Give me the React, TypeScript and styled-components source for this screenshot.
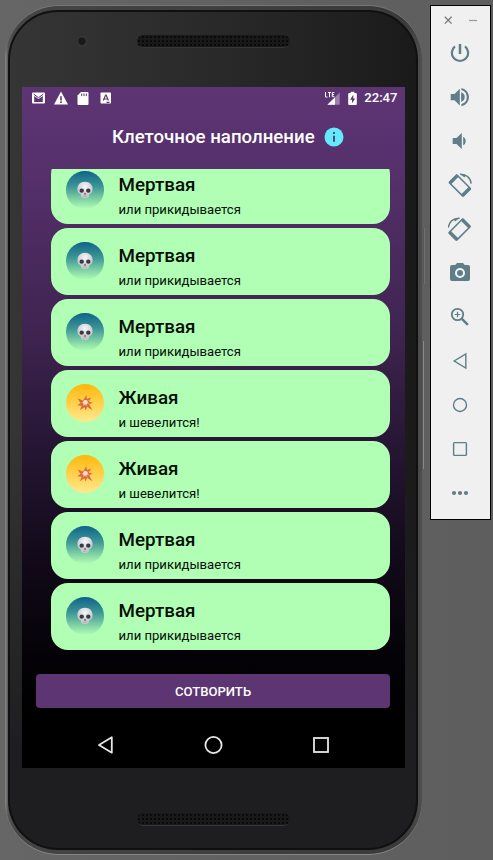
import React from "react";
import styled, { createGlobalStyle } from "styled-components";

const GlobalStyle = createGlobalStyle`
  * { box-sizing: border-box; }
  body { margin: 0; overflow: hidden; background: #626262; }
  svg { display: block; flex: none; }
`;

const Desktop = styled.main`
  display: flex;
  align-items: flex-start;
  width: 493px;
  height: 860px;
  padding: 5px 2px 5px 5px;
  background: linear-gradient(90deg, #666 0%, #626162 50%, #5e5e5e 100%);
  font-family: Roboto, "Noto Sans", sans-serif;
`;

const PhoneShell = styled.section`
  position: relative;
  width: 417px;
  height: 850px;
  padding: 4px 4px 4px 3px;
  border-radius: 54px;
  background: linear-gradient(90deg, #8a8a8a 0, #555 3px, #444 12px, #3a3a3a 400px, #4e4e4e 100%);
  border-top: 1px solid #777;
  border-bottom: 1px solid #858585;
`;

const PhoneFace = styled.div`
  display: flex;
  flex-direction: column;
  align-items: center;
  height: 100%;
  border: 2px solid #101010;
  border-radius: 50px;
  background:
    linear-gradient(180deg, transparent 0%, transparent 50%, #1e1e20 88%),
    linear-gradient(90deg, #353535 0%, #2c2c2c 40%, #212121 80%, #1a1a1a 100%);
`;

const SideButton = styled.div<{ $top: number; $height: number; $right: number; $tone: string }>`
  position: absolute;
  right: ${(p) => p.$right}px;
  top: ${(p) => p.$top}px;
  width: 2px;
  height: ${(p) => p.$height}px;
  border-right: 1px solid ${(p) => p.$tone};
  background: #555;
`;

const TopBezel = styled.div`
  display: flex;
  align-items: center;
  width: 100%;
  height: 75px;
  padding: 0 0 17px 67px;
`;

const Lens = styled.div`
  width: 11px;
  height: 11px;
  margin-right: 49px;
  border-radius: 50%;
  background: radial-gradient(circle at 45% 48%, #191919 0 3px, #3c3c3c 5px, #303030 6px);
`;

const Grille = styled.div`
  width: 153px;
  height: 13px;
  border-radius: 7px;
  border-bottom: 1px solid #363636;
  background: radial-gradient(circle, #0a0a0a 0.7px, transparent 1.3px) 0 0 / 4px 4px, #191919;
`;

const BottomBezel = styled.div`
  display: flex;
  width: 100%;
  padding: 45px 0 0 127px;
`;

const Screen = styled.div`
  display: flex;
  flex-direction: column;
  width: 383px;
  height: 681px;
  margin-left: 1px;
  flex: none;
  background: linear-gradient(180deg, #5d3573 0%, #55306b 13%, #3f2450 36%, #241532 54%, #110918 70%, #040206 84%, #000 92%);
  color: #fff;
`;

const StatusBar = styled.div`
  display: flex;
  align-items: center;
  justify-content: space-between;
  height: 22px;
  padding: 0 7.5px 0 9px;
`;

const StatusIcons = styled.div`
  display: flex;
  align-items: center;
  gap: 7px;
`;

const Clock = styled.span`
  font-size: 13.1px;
  line-height: 22px;
  font-weight: 500;
`;

const Header = styled.header`
  display: flex;
  align-items: center;
  gap: 9px;
  height: 60px;
  padding: 0 0 5px 90px;
`;

const Heading = styled.h1`
  margin: 0;
  font-size: 18.67px;
  line-height: 24px;
  font-weight: 500;
  white-space: nowrap;
`;

const CellList = styled.div`
  display: flex;
  flex-direction: column;
  justify-content: flex-end;
  gap: 4px;
  height: 481px;
  margin: 0 15px 0 29px;
  overflow: hidden;
`;

const CellCard = styled.article`
  display: flex;
  flex: none;
  height: 67px;
  padding: 14px 15px 0;
  gap: 15px;
  border-radius: 17px;
  background: #b0ffb4;
  color: #060e06;
`;

const Avatar = styled.div<{ $alive: boolean }>`
  display: flex;
  align-items: center;
  justify-content: center;
  width: 37.5px;
  height: 37.5px;
  border-radius: 50%;
  background: ${(p) =>
    p.$alive
      ? "linear-gradient(180deg, #ffb80a, #ffe98f)"
      : "linear-gradient(180deg, #0e638a 0%, #3f9795 42%, #8bdca8 80%, #b0ffb4 100%)"};
`;

const CellText = styled.div`
  display: flex;
  flex-direction: column;
  padding-top: 2px;
`;

const CellTitle = styled.span`
  font-size: 18.8px;
  line-height: 24px;
  font-weight: 500;
`;

const CellNote = styled.span`
  padding-top: 4px;
  font-size: 13.1px;
  line-height: 18px;
  white-space: nowrap;
`;

const CreateButton = styled.button`
  height: 34px;
  margin: 24px 15px 0 14px;
  padding: 0;
  border: 0;
  border-radius: 4px;
  background: #5d3573;
  color: #fff;
  font: 500 13.1px/35px Roboto, sans-serif;
`;

const NavBar = styled.nav`
  display: flex;
  justify-content: space-between;
  align-items: center;
  height: 46px;
  margin-top: 14px;
  padding: 0 74px;
`;

const Toolbar = styled.aside`
  display: flex;
  flex-direction: column;
  align-items: center;
  width: 61px;
  height: 515px;
  margin-left: 8px;
  padding-right: 1px;
  border: 1px solid #000;
  background: #f0f0f1;
  color: #5f7e88;
`;

const WindowControls = styled.div`
  display: flex;
  gap: 14px;
  padding: 8px 0 0 2px;
  height: 25px;
  color: #777;
`;

const ToolButton = styled.div`
  display: flex;
  align-items: center;
  height: 44px;
`;

const Skull = () => (
  <svg width="18" height="20" viewBox="0 0 18 20">
    <defs>
      <radialGradient id="bone" cx="50%" cy="30%">
        <stop offset="0" stopColor="#f8f6f8" />
        <stop offset="1" stopColor="#c9ccd2" />
      </radialGradient>
    </defs>
    <path d="M9 1.800c4.800 0 7.600 3.200 7.600 7.200 0 2.200-.8 4-2.400 4.800-1 .4-1 1-1.200 1.900-.2 1.500-1.600 2.200-4 2.200s-3.800-.7-4-2.200c-.2-.9-.2-1.500-1.200-1.900C2.200 13 1.400 11.200 1.400 9c0-4 2.800-7.200 7.600-7.200z" fill="url(#bone)" />
    <ellipse cx="5.700" cy="10.700" rx="2.200" ry="2.100" fill="#3d3942" />
    <ellipse cx="12.300" cy="10.700" rx="2.200" ry="2.100" fill="#3d3942" />
    <path d="M9 12.600l1.100 1.900H7.900z" fill="#5a3b40" />
    <path d="M6.800 16.100h4.400M8 15.500v1.600M10 15.500v1.600" stroke="#b3a9ab" strokeWidth=".6" />
  </svg>
);

const Burst = () => (
  <svg width="19" height="19" viewBox="0 0 19 19">
    <path d="M9.500 5.400L11.200 2l.7 4 4.200-1.600-2.300 4 3.900 1.300-3.600 1.600 3.300 5.900-5.300-3.400-1.400 3.800-1.300-3.400-4.500 3 1.800-4.500-4.600-.5 3.500-2.300-3.200-4.700 5.200 2.200z" fill="#d8683e" />
    <path d="M9.900 6.400l1.500 1.500 2.600-.8-1.300 2 1.900 1.600-2.600.4.500 2.300-2.300-1.400-2.200 1.300.4-2.500-2.400-.9 2.400-1.100z" fill="#f4a078" />
    <circle cx="10.300" cy="9.300" r="2.200" fill="#ffe5c4" />
  </svg>
);

const StatusBarView = () => (
  <StatusBar>
    <StatusIcons>
      <svg width="15" height="14" viewBox="0 0 15 14">
        <rect x="1" y="1.500" width="13" height="11" rx="1" fill="#fff" />
        <path d="M3.200 11V5l4.300 3.100L11.800 5v6z" fill="#5d3573" />
        <path d="M2.700 3.200l4.800 3.500 4.800-3.500" fill="none" stroke="#5d3573" strokeWidth="1" />
      </svg>
      <svg width="16" height="14" viewBox="0 0 16 14">
        <path d="M8 .4l7 13H1z" fill="#fff" />
        <path d="M8 5.200v4.200M8 10.300v1.700" stroke="#5d3573" strokeWidth="1.600" />
      </svg>
      <svg width="14" height="15" viewBox="0 0 14 15">
        <path d="M5 1h6.500a1 1 0 011 1v11a1 1 0 01-1 1h-9a1 1 0 01-1-1V4.600z" fill="#fff" />
        <path d="M5.700 2.500v2.600M8 2.500v2.600M10.300 2.500v2.600" stroke="#5d3573" strokeWidth="1" />
      </svg>
      <svg width="17" height="14" viewBox="0 0 17 14">
        <rect x="3.500" y="1.500" width="10.500" height="11" rx=".8" fill="#fff" />
        <path d="M6.300 9.600L8.600 4h.5l2.300 5.600M7 8h3.700M9.500 11.300h3" fill="none" stroke="#5d3573" strokeWidth="1.200" />
      </svg>
    </StatusIcons>
    <StatusIcons>
      <svg width="17" height="15" viewBox="0 0 17 15">
        <path d="M15.700 1.500V13.800H3.400z" fill="#fff" opacity=".38" />
        <path d="M11 6.200v7.600H3.400z" fill="#fff" />
        <path d="M1.500 1v5h2M4 1.500h3M5.500 1.500V6.200M10.300 1.500H8.300v4.200h2M8.300 3.600h1.800" fill="none" stroke="#fff" strokeWidth="1" />
      </svg>
      <svg width="9" height="15" viewBox="0 0 9 15">
        <path d="M2.700.8h3.600v1.300h1.500a1 1 0 011 1v10a1 1 0 01-1 1H1.200a1 1 0 01-1-1v-10a1 1 0 011-1h1.500z" fill="#fff" />
        <path d="M5.300 3.800L2 8.700h2v3.500l3.200-4.800H5.300z" fill="#5d3573" />
      </svg>
      <Clock>22:47</Clock>
    </StatusIcons>
  </StatusBar>
);

const RotateGlyph = ({ mirrored = false }: { mirrored?: boolean }) => (
  <svg width="24" height="24" viewBox="0 0 24 24">
    <g transform={mirrored ? "translate(23.500 0) scale(-1 1)" : undefined} fill="none" stroke="currentColor">
      <g transform="rotate(45 11.900 12.600)">
        <rect x="2.100" y="7.200" width="19.600" height="10.800" rx="1" strokeWidth="1.600" />
        <path d="M3.200 7v11.200M20.600 7v11.200" strokeWidth="3.200" />
      </g>
      <path d="M12 1.300C18 1 22.600 4.800 23.200 10.600" strokeWidth="1.400" />
      <path d="M11.500.8l5 3.600 1.300-2.300z" fill="currentColor" stroke="none" />
    </g>
  </svg>
);

const Tool = ({ children }: { children: React.ReactNode }) => (
  <ToolButton>
    <svg width="24" height="24" viewBox="0 0 24 24" fill="none" stroke="currentColor">
      {children}
    </svg>
  </ToolButton>
);

const EmulatorTools = () => (
  <Toolbar>
    <WindowControls>
      <svg width="12" height="12" viewBox="0 0 12 12">
        <path d="M2.800 2.800l6.800 6.800M9.600 2.800L2.800 9.600" stroke="currentColor" strokeWidth="1.300" />
      </svg>
      <svg width="12" height="12" viewBox="0 0 12 12">
        <path d="M1 6.500h8" stroke="#999" strokeWidth="1.200" />
      </svg>
    </WindowControls>
    <Tool>
      <path d="M12 3v10" strokeWidth="2.500" />
      <path d="M7 5.300a8.200 8.200 0 1010 0" strokeWidth="2.200" />
    </Tool>
    <Tool>
      <path d="M2.700 8.900h3.800l5.300-5.200v16.800l-5.300-5.200H2.700z" fill="currentColor" stroke="none" />
      <path d="M13.100 7.300a5 5 0 010 9.600z" fill="currentColor" stroke="none" />
      <path d="M13.400 4a8.300 8.300 0 010 16.200" strokeWidth="2.200" />
    </Tool>
    <Tool>
      <path d="M4.700 8.900h3.800l5.300-5v16.200l-5.300-5H4.700z" fill="currentColor" stroke="none" />
      <path d="M15.200 7.700a4.900 4.900 0 010 8.600z" fill="currentColor" stroke="none" />
    </Tool>
    <ToolButton><RotateGlyph /></ToolButton>
    <ToolButton><RotateGlyph mirrored /></ToolButton>
    <Tool>
      <path d="M9 2L7.200 4H4a2 2 0 00-2 2v12a2 2 0 002 2h16a2 2 0 002-2V6a2 2 0 00-2-2h-3.200L15 2z" fill="currentColor" stroke="none" />
      <circle cx="12" cy="12" r="4" stroke="#edf6fa" strokeWidth="2" />
    </Tool>
    <Tool>
      <circle cx="9.500" cy="9.500" r="5.700" strokeWidth="1.800" />
      <path d="M13.600 13.600l6.300 6.300" strokeWidth="2.500" />
      <path d="M9.500 6.700v5.600M6.700 9.500h5.600" strokeWidth="1.200" />
    </Tool>
    <Tool><path d="M17.800 5v14L6.200 12z" strokeWidth="1.400" /></Tool>
    <Tool><circle cx="12" cy="12" r="6.500" strokeWidth="1.400" /></Tool>
    <Tool><rect x="5.600" y="5.600" width="12.800" height="12.800" rx=".8" strokeWidth="1.400" /></Tool>
    <Tool>
      <g fill="currentColor" stroke="none">
        <circle cx="6" cy="12" r="2.100" />
        <circle cx="12" cy="12" r="2.100" />
        <circle cx="18" cy="12" r="2.100" />
      </g>
    </Tool>
  </Toolbar>
);

const cells = [false, false, false, true, true, false, false];

export default function App() {
  return (
    <>
      <GlobalStyle />
      <Desktop>
        <PhoneShell>
          <PhoneFace>
            <TopBezel>
              <Lens />
              <Grille />
            </TopBezel>
            <Screen>
              <StatusBarView />
              <Header>
                <Heading>Клеточное наполнение</Heading>
                <svg width="20" height="20" viewBox="0 0 20 20">
                  <circle cx="10" cy="10" r="9.500" fill="#66e8fd" />
                  <path d="M10 5v2M10 8.800v6" stroke="#4a4576" strokeWidth="1.900" />
                </svg>
              </Header>
              <CellList>
                {cells.map((alive, i) => (
                  <CellCard key={i}>
                    <Avatar $alive={alive}>{alive ? <Burst /> : <Skull />}</Avatar>
                    <CellText>
                      <CellTitle>{alive ? "Живая" : "Мертвая"}</CellTitle>
                      <CellNote>{alive ? "и шевелится!" : "или прикидывается"}</CellNote>
                    </CellText>
                  </CellCard>
                ))}
              </CellList>
              <CreateButton>СОТВОРИТЬ</CreateButton>
              <NavBar>
                <svg width="20" height="20" viewBox="0 0 20 20">
                  <path d="M15.800 2.300v15.400L3 10z" fill="none" stroke="#e6e6e6" strokeWidth="1.800" strokeLinejoin="round" />
                </svg>
                <svg width="20" height="20" viewBox="0 0 20 20">
                  <circle cx="9.500" cy="10" r="8.100" fill="none" stroke="#e6e6e6" strokeWidth="1.800" />
                </svg>
                <svg width="20" height="20" viewBox="0 0 20 20">
                  <rect x="3" y="3" width="14" height="14" fill="none" stroke="#e6e6e6" strokeWidth="1.800" />
                </svg>
              </NavBar>
            </Screen>
            <BottomBezel>
              <Grille />
            </BottomBezel>
          </PhoneFace>
          <SideButton $top={222} $height={56} $right={-3} $tone="#6e6e6e" />
          <SideButton $top={335} $height={128} $right={-2} $tone="#8a8a8a" />
        </PhoneShell>
        <EmulatorTools />
      </Desktop>
    </>
  );
}
